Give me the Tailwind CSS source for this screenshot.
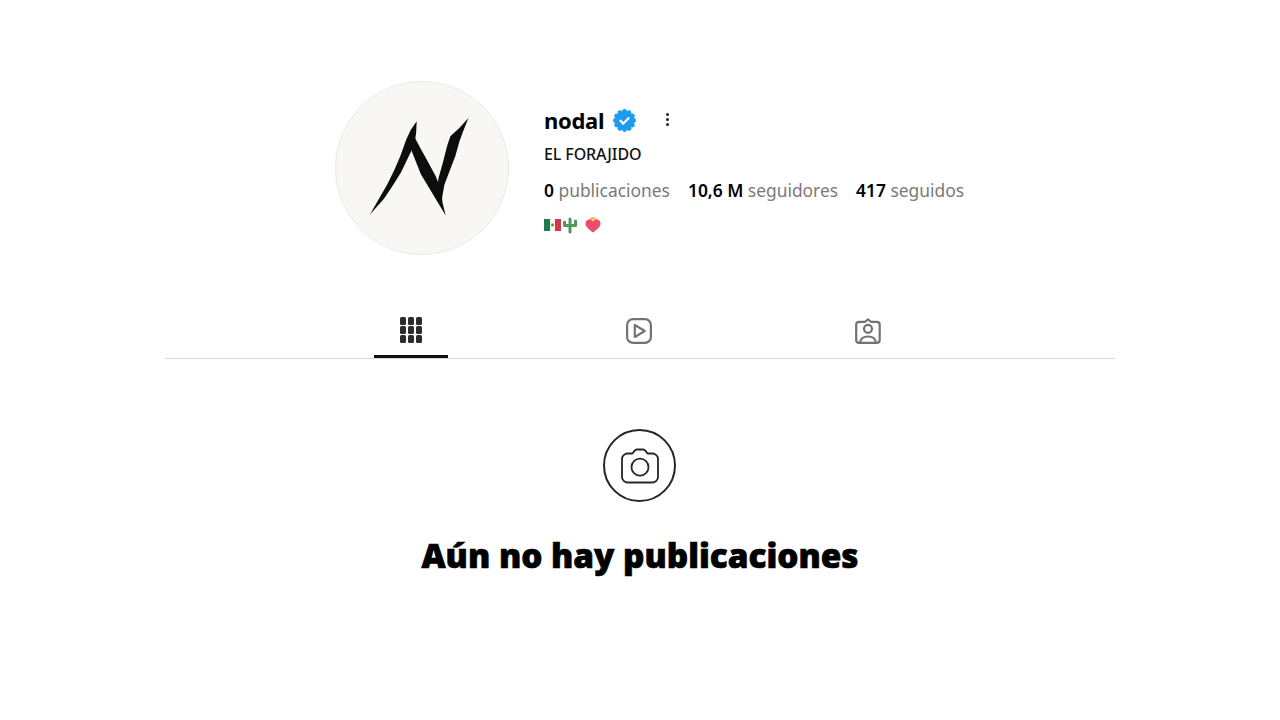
<!DOCTYPE html>
<html lang="es">
<head>
    <meta charset="UTF-8">
    <meta name="viewport" content="width=device-width, initial-scale=1.0">
    <title>nodal</title>
    <script src="https://cdn.jsdelivr.net/npm/@tailwindcss/browser@4"></script>
</head>
<body class="bg-white min-h-screen font-['Noto_Sans',sans-serif] text-black overflow-hidden">
    <div class="w-[950px] mx-auto">
        <!-- profile header -->
        <div class="flex pt-[81px] pl-[170px] h-[299px]">
            <div class="w-[174px] h-[174px] rounded-full bg-[#f8f7f5] border border-[#ebeae7] shrink-0">
                <svg viewBox="45 33 522 522" class="w-full h-full blur-[0.5px]">
                    <g fill="#0d0d0d">
                        <polygon points="148,435 175,388 200,345 222,300 240,258 258,208 272,178 290,152 288,190 282,225 264,262 242,308 217,348 190,388"/>
                        <polygon points="262,210 282,198 300,232 324,275 348,320 365,362 368,398 378,438 350,392 326,352 303,314 283,264"/>
                        <polygon points="447,142 430,185 420,212 407,258 390,302 374,345 365,395 352,362 356,325 370,275 382,228 392,198 420,172"/>
                    </g>
                </svg>
            </div>
            <div class="ml-[35px] pt-[23px]">
                <div class="flex items-center h-[32px]">
                    <span class="text-[22px] font-bold leading-none tracking-[-0.3px]">nodal</span>
                    <svg viewBox="0 0 24 24" class="w-[23px] h-[23px] ml-[9px]">
                        <g fill="#1d9bf0">
                            <circle cx="12" cy="12" r="9.800"/>
                            <circle cx="21.500" cy="12" r="2.500"/><circle cx="20.230" cy="16.750" r="2.500"/><circle cx="16.750" cy="20.230" r="2.500"/>
                            <circle cx="12" cy="21.500" r="2.500"/><circle cx="7.250" cy="20.230" r="2.500"/><circle cx="3.770" cy="16.750" r="2.500"/>
                            <circle cx="2.500" cy="12" r="2.500"/><circle cx="3.770" cy="7.250" r="2.500"/><circle cx="7.250" cy="3.770" r="2.500"/>
                            <circle cx="12" cy="2.500" r="2.500"/><circle cx="16.750" cy="3.770" r="2.500"/><circle cx="20.230" cy="7.250" r="2.500"/>
                        </g>
                        <path fill="none" stroke="#fff" stroke-width="2.400" stroke-linecap="round" stroke-linejoin="round" d="M7.800 12.200l3 3 5.400-5.600"/>
                    </svg>
                    <div class="flex flex-col gap-[2px] ml-[30px] -mt-[1px]">
                        <span class="w-[3px] h-[3px] rounded-full bg-[#222]"></span>
                        <span class="w-[3px] h-[3px] rounded-full bg-[#222]"></span>
                        <span class="w-[3px] h-[3px] rounded-full bg-[#222]"></span>
                    </div>
                </div>
                <p class="text-[16px] font-medium leading-[20px] mt-[8px] text-[#111] tracking-[-0.1px]">EL FORAJIDO</p>
                <div class="flex gap-[18px] text-[17.400px] leading-[24px] mt-[14px] text-[#7a7a7a]">
                    <span><b class="font-semibold text-black">0</b> publicaciones</span>
                    <span><b class="font-semibold text-black">10,6 M</b> seguidores</span>
                    <span><b class="font-semibold text-black">417</b> seguidos</span>
                </div>
                <div class="flex items-center mt-[14px] h-[18px]">
                    <svg viewBox="0 0 17 12" class="w-[17px] h-[12px]">
                        <rect width="6" height="12" fill="#1f7a4d"/>
                        <rect x="6" width="5" height="12" fill="#f4f4f4"/>
                        <rect x="11" width="6" height="12" fill="#d8344a"/>
                        <circle cx="8.500" cy="6" r="1.400" fill="#8a6d3b"/>
                    </svg>
                    <svg viewBox="0 0 18 18" class="w-[18px] h-[18px]">
                        <g fill="none" stroke="#4c9a5a" stroke-width="3" stroke-linecap="round" stroke-linejoin="round">
                            <path d="M9 3v13"/>
                            <path d="M3.500 6v3.500h5"/>
                            <path d="M14.500 5v4.500h-5"/>
                        </g>
                    </svg>
                    <svg viewBox="0 0 18 18" class="w-[18px] h-[18px] ml-[5px]">
                        <path fill="#f2c14e" d="M9 1c2 0 3.500 1 4 3H5c.5-2 2-3 4-3z"/>
                        <path fill="#ee4b6e" d="M9 16.500C5 13.500 1.500 11 1.500 7.500 1.500 5 3.400 3.500 5.300 3.500 7 3.500 8.300 4.300 9 5.500 9.700 4.300 11 3.500 12.700 3.500 14.600 3.500 16.500 5 16.500 7.500 16.500 11 13 13.500 9 16.500z"/>
                    </svg>
                </div>
            </div>
        </div>

        <!-- tabs -->
        <div class="h-[60px] flex justify-center border-b border-[#dbdbdb]">
            <div class="w-[228px] flex justify-center">
                <div class="w-[74px] h-[59px] border-b-[3px] border-[#111] flex items-center justify-center pt-[5px]">
                    <svg viewBox="0 0 22 26" class="w-[22px] h-[26px]" fill="#2b2b2b">
                        <rect x="0" y="0" width="6" height="8" rx="1.500"/><rect x="8" y="0" width="6" height="8" rx="1.500"/><rect x="16" y="0" width="6" height="8" rx="1.500"/>
                        <rect x="0" y="9" width="6" height="8" rx="1.500"/><rect x="8" y="9" width="6" height="8" rx="1.500"/><rect x="16" y="9" width="6" height="8" rx="1.500"/>
                        <rect x="0" y="18" width="6" height="8" rx="1.500"/><rect x="8" y="18" width="6" height="8" rx="1.500"/><rect x="16" y="18" width="6" height="8" rx="1.500"/>
                    </svg>
                </div>
            </div>
            <div class="w-[228px] h-[59px] flex items-center justify-center pt-[5px]">
                <svg viewBox="0 0 26 26" class="w-[26px] h-[26px]" fill="none" stroke="#737373" stroke-width="2.200">
                    <rect x="1.100" y="1.100" width="23.800" height="23.800" rx="6"/>
                    <path stroke-linejoin="round" d="M8.800 7v12l10-6z"/>
                </svg>
            </div>
            <div class="w-[230px] h-[59px] flex items-center justify-center pt-[5px]">
                <svg viewBox="0 0 26 26" class="w-[26px] h-[26px]" fill="none" stroke="#737373" stroke-width="2.200">
                    <path stroke-linejoin="round" d="M8.500 3.800h1.700L13 1.300l2.800 2.500h1.700l4.300 0c1.600 0 2.900 1.300 2.900 2.900v15.200c0 1.600-1.300 2.900-2.900 2.900H4.100c-1.600 0-2.900-1.300-2.900-2.900V6.700c0-1.600 1.300-2.900 2.900-2.900z"/>
                    <circle cx="13" cy="10.800" r="4"/>
                    <path d="M5 24.500c.6-4 3.500-6 8-6s7.400 2 8 6"/>
                </svg>
            </div>
        </div>
    </div>

    <!-- empty state -->
    <div class="flex flex-col items-center pt-[70px]">
        <div class="w-[73px] h-[73px] -ml-[1px] rounded-full border-2 border-[#262626] flex items-center justify-center">
            <svg viewBox="0 0 40 36" class="w-[40px] h-[36px]" fill="none" stroke="#262626" stroke-width="1.800">
                <path stroke-linejoin="round" d="M12.500 5.500l2-2.600c.6-.9 1.400-1.400 2.500-1.400h6c1.100 0 1.900.5 2.500 1.400l2 2.600h4.500c3.500 0 6 2.500 6 5.500v18c0 3-2.500 5.500-6 5.500H8c-3.500 0-6-2.500-6-5.500v-18c0-3 2.500-5.500 6-5.500z"/>
                <circle cx="20" cy="19.200" r="8.500"/>
            </svg>
        </div>
        <h2 class="text-[33.300px] font-black leading-[44px] mt-[31px] text-black [-webkit-text-stroke:0.7px_black]">Aún no hay publicaciones</h2>
    </div>
</body>
</html>
